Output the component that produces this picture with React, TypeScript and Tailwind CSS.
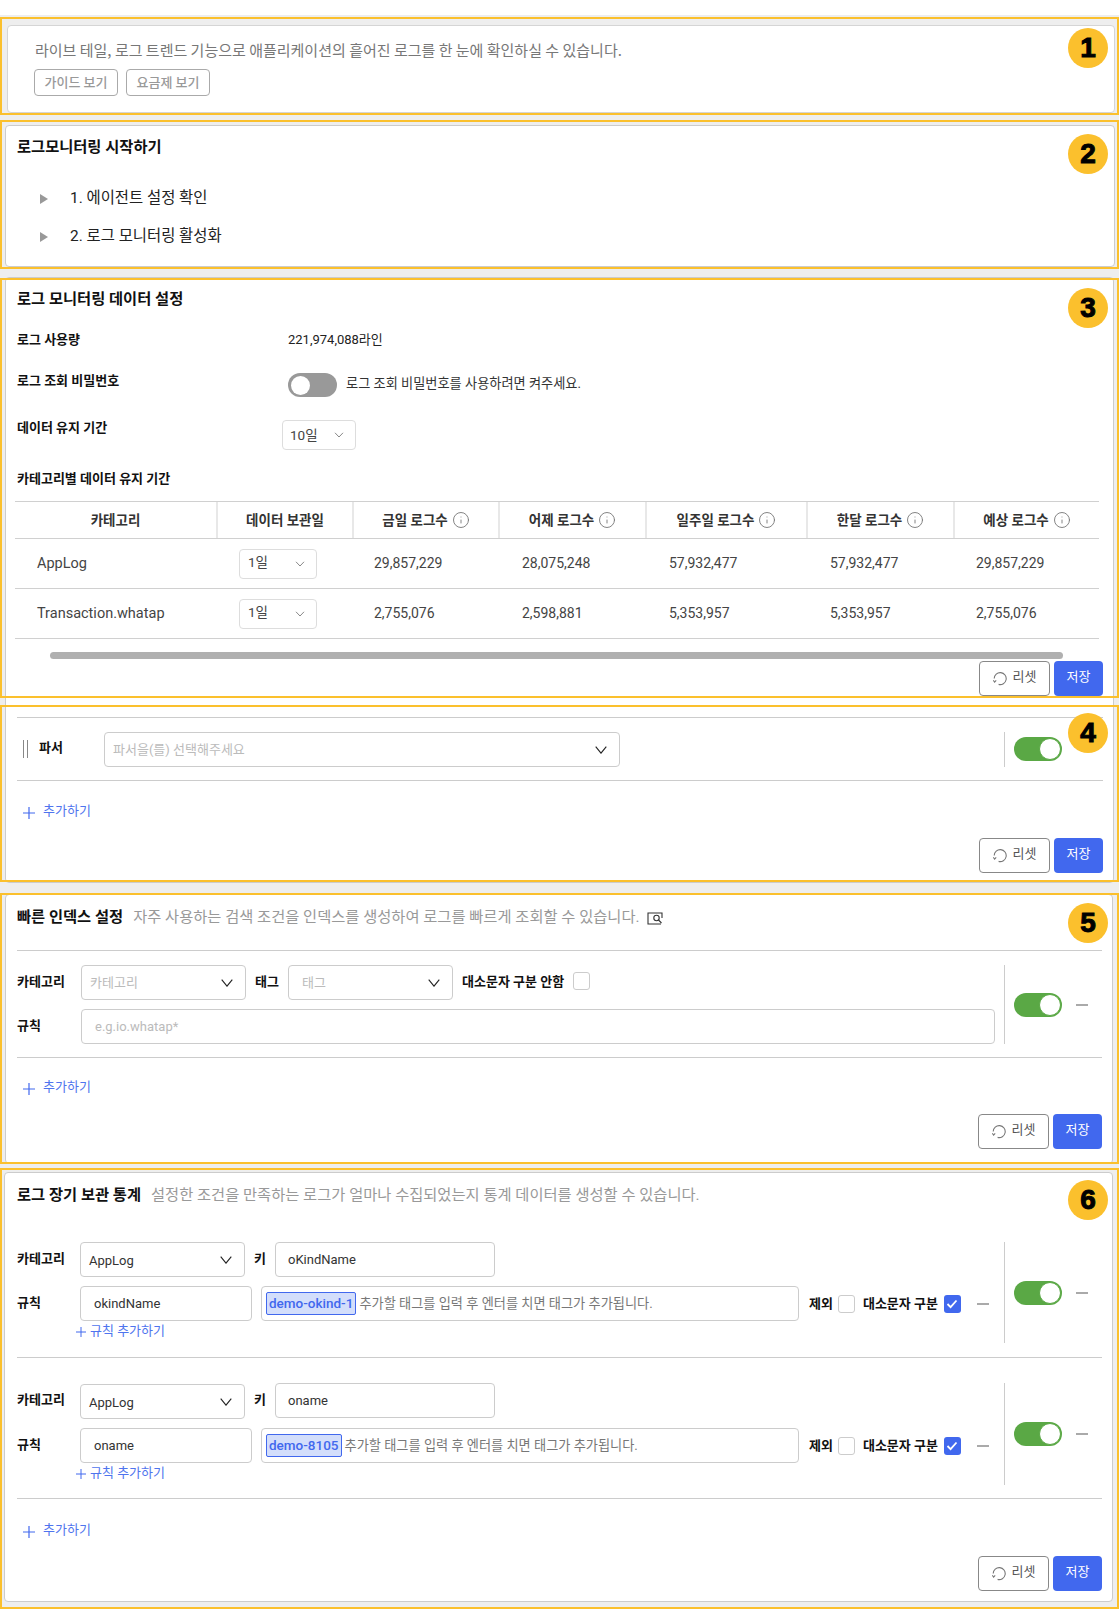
import React from "react";
import { Info } from "lucide-react";

const Chevron = ({ small = false }: { small?: boolean }) =>
  small ? (
    <svg width="10" height="6" viewBox="0 0 10 6" fill="none" stroke="#888" strokeWidth="1"><path d="M1 .8 5 5l4-4.2" /></svg>
  ) : (
    <svg width="12" height="8" viewBox="0 0 12 8" fill="none" stroke="#222" strokeWidth="1.1"><path d="M.7.7 6 7.2 11.3.7" /></svg>
  );

const Toggle = ({ on = true }: { on?: boolean }) =>
  on ? (
    <div className="w-[48px] h-[24px] rounded-full bg-[#5aa845] flex items-center justify-end pr-[1px] shrink-0">
      <div className="w-[22px] h-[22px] rounded-full bg-white border-[1px] border-[#5aa845]" />
    </div>
  ) : (
    <div className="w-[49px] h-[24px] rounded-full bg-[#999999] flex items-center pl-[3px] shrink-0">
      <div className="w-[19px] h-[19px] rounded-full bg-white" />
    </div>
  );

const Minus = () => <div className="w-[12px] h-[2px] bg-[#aaaaaa] shrink-0" />;

const Check = ({ on = false, cls = "" }: { on?: boolean; cls?: string }) =>
  on ? (
    <div className={`w-[17px] h-[18px] rounded-[3px] bg-[#4168ee] flex items-center justify-center shrink-0 ${cls}`}>
      <svg width="12" height="10" viewBox="0 0 12 10" fill="none" stroke="#fff" strokeWidth="1.8"><path d="M1.5 5 4.6 8.2 10.5 1.5" /></svg>
    </div>
  ) : (
    <div className={`w-[17px] h-[18px] rounded-[3px] bg-white border border-[#cccccc] shrink-0 ${cls}`} />
  );

const Buttons = () => (
  <div className="flex justify-end gap-[4px]">
    <div className="w-[71px] h-[35px] border border-[#888888] rounded-[4px] flex items-center justify-center gap-[6px] bg-white text-[13px] text-[#555555]">
      <svg width="14" height="15" viewBox="0 0 14 15" fill="none" stroke="#777" strokeWidth="1.1">
        <path d="M1.2 7.5A6 6 0 1 1 5.6 13.4" />
        <path d="M.3 9.2l1.3 1.9 1.6-1.7" />
      </svg>
      <span className="-mt-[3px]">리셋</span>
    </div>
    <div className="w-[49px] h-[35px] bg-[#4168ee] rounded-[4px] flex items-center justify-center text-white text-[13px]">
      <span className="-mt-[3px]">저장</span>
    </div>
  </div>
);

const AddRow = ({ cls = "" }: { cls?: string }) => (
  <div className={`h-[20px] flex items-center text-[13px] text-[#4f74ee] ${cls}`}>
    <svg width="12" height="12" viewBox="0 0 12 12" stroke="#4168ee" strokeWidth="1.2" className="mt-[3px] mr-[8px]"><path d="M6 0v12M0 6h12" /></svg>
    <span>추가하기</span>
  </div>
);

const InfoTh = ({ children }: { children: React.ReactNode }) => (
  <div className="flex items-center justify-center gap-[4px] border-l-2 border-[#e8e8e8] text-[13.5px] font-bold text-[#333333]">
    <span>{children}</span>
    <Info size={18} strokeWidth={1.2} color="#777777" />
  </div>
);

const PlainTh = ({ children, first = false }: { children: React.ReactNode; first?: boolean }) => (
  <div className={`flex items-center justify-center text-[13.5px] font-bold text-[#333333] ${first ? "" : "border-l-2 border-[#e8e8e8]"}`}>{children}</div>
);

const TableRow = ({ name, v }: { name: string; v: string[] }) => (
  <div className="grid grid-cols-[201px_136px_146px_147px_161px_147px_146px] h-[50px] border-b border-[#d0d0d0] items-center text-[14px] text-[#444444]">
    <div className="pl-[22px] text-[14.5px]">{name}</div>
    <div className="pl-[23px]">
      <div className="w-[78px] h-[30px] border border-[#dddddd] rounded-[4px] flex items-center justify-between pl-[8px] pr-[11px]">
        <span className="-mt-[2px] text-[13.5px]">1일</span>
        <Chevron small />
      </div>
    </div>
    <div className="pl-[22px]">{v[0]}</div>
    <div className="pl-[24px]">{v[1]}</div>
    <div className="pl-[24px]">{v[2]}</div>
    <div className="pl-[24px]">{v[3]}</div>
    <div className="pl-[23px]">{v[4]}</div>
  </div>
);

const Label = ({ children, cls = "" }: { children: React.ReactNode; cls?: string }) => (
  <div className={`text-[13px] font-bold text-[#111111] shrink-0 ${cls}`}>{children}</div>
);

const Select = ({ text, placeholder = false, cls = "" }: { text: string; placeholder?: boolean; cls?: string }) => (
  <div className={`w-[165px] h-[35px] border border-[#cccccc] rounded-[4px] flex items-center justify-between pl-[8px] pr-[12px] shrink-0 ${cls}`}>
    <span className={placeholder ? "text-[13px] text-[#bbbbbb]" : "text-[13px] text-[#333333] mt-[2px]"}>{text}</span>
    <Chevron />
  </div>
);

const Group = ({ keyText, rule, tag, first }: { keyText: string; rule: string; tag: string; first: boolean }) => (
  <div className={`flex ${first ? "h-[101px]" : "h-[102px]"}`}>
    <div className="w-[987px] shrink-0">
      <div className="flex items-start h-[35px]">
        <Label cls="w-[63px] h-[35px] flex items-center pb-[2px]">카테고리</Label>
        <Select text="AppLog" cls={first ? "" : "mt-[1px]"} />
        <Label cls="w-[30px] pl-[9px] h-[35px] flex items-center pb-[2px]">키</Label>
        <div className="w-[220px] h-[35px] border border-[#cccccc] rounded-[4px] flex items-center pl-[12px] text-[13px] text-[#333333]">{keyText}</div>
      </div>
      <div className={`flex items-center h-[35px] ${first ? "mt-[9px]" : "mt-[10px]"}`}>
        <Label cls="w-[63px] pb-[2px]">규칙</Label>
        <div className="w-[172px] h-[35px] border border-[#cccccc] rounded-[4px] flex items-center pl-[13px] text-[13px] text-[#333333] shrink-0">{rule}</div>
        <div className="w-[538px] h-[35px] ml-[9px] border border-[#cccccc] rounded-[4px] flex items-center pl-[4px] shrink-0">
          <span className="h-[23px] border border-[#4168ee] rounded-[2px] bg-[#d3defb] text-[#4168ee] text-[13.5px] font-medium px-[2px] flex items-center leading-none shrink-0">{tag}</span>
          <span className="ml-[3px] text-[13.2px] text-[#777777] whitespace-nowrap">추가할 태그를 입력 후 엔터를 치면 태그가 추가됩니다.</span>
        </div>
        <Label cls="ml-[10px]">제외</Label>
        <Check cls="ml-[5px]" />
        <Label cls="ml-[8px]">대소문자 구분</Label>
        <Check on cls="ml-[6px]" />
        <div className="ml-[16px]"><Minus /></div>
      </div>
      <div className="h-[16px] mt-[2px] ml-[59px] flex items-center text-[13px] text-[#4f74ee]">
        <svg width="10" height="10" viewBox="0 0 10 10" stroke="#4168ee" strokeWidth="1" className="mt-[2px] mr-[4px]"><path d="M5 0v10M0 5h10" /></svg>
        <span>규칙 추가하기</span>
      </div>
    </div>
    <div className="w-px bg-[#cccccc] shrink-0" />
    <div className="ml-[9px] self-center flex items-center">
      <Toggle />
      <div className="ml-[14px]"><Minus /></div>
    </div>
  </div>
);

const Mark = ({ box, badge, n }: { box: string; badge: string; n: string }) => (
  <>
    <div className={`absolute left-0 w-[1119px] border-2 border-[#fbc02d] pointer-events-none ${box}`} />
    <div className={`absolute left-[1068px] w-[40px] h-[40px] rounded-full bg-[#fbc02d] flex items-center justify-center text-black text-[28px] font-bold font-['Liberation_Sans',sans-serif] [-webkit-text-stroke:1px_black] ${badge}`}>{n}</div>
  </>
);

export default function App() {
  return (
    <div className="relative w-[1119px] h-[1609px] bg-[#eeeeee] overflow-hidden font-[Roboto,'Noto_Sans_CJK_KR',sans-serif]">
      <div className="h-[15px] bg-white" />

      {/* 1 */}
      <div className="ml-[7px] mt-[10px] w-[1108px] h-[88px] bg-white border border-[#d5d5d5] rounded-[4px] pl-[26px] pt-[14px]">
        <div className="ml-[1px] text-[15px] leading-[20px] text-[#777777] font-['Noto_Sans_CJK_KR',sans-serif]">라이브 테일, 로그 트렌드 기능으로 애플리케이션의 흩어진 로그를 한 눈에 확인하실 수 있습니다.</div>
        <div className="flex gap-[8px] mt-[9px]">
          <div className="w-[84px] h-[27px] border-[1.5px] border-[#aaaaaa] rounded-[4px] flex items-center justify-center text-[13px] font-medium text-[#999999]">가이드 보기</div>
          <div className="w-[84px] h-[27px] border-[1.5px] border-[#aaaaaa] rounded-[4px] flex items-center justify-center text-[13px] font-medium text-[#999999]">요금제 보기</div>
        </div>
      </div>

      {/* 2 */}
      <div className="ml-[5px] mt-[12px] w-[1110px] h-[142px] bg-white border border-[#cccccc] rounded-[4px] pl-[11px] pt-[11px]">
        <div className="h-[20px] leading-[20px] text-[15.3px] font-bold text-[#111111]">로그모니터링 시작하기</div>
        <div className="mt-[32px] ml-[23px] flex items-center h-[20px] text-[15.4px] text-[#222222]">
          <div className="w-0 h-0 border-y-[5px] border-y-transparent border-l-[8px] border-l-[#999999] mr-[22px]" />
          <span>1. 에이전트 설정 확인</span>
        </div>
        <div className="mt-[18px] ml-[23px] flex items-center h-[20px] text-[15.4px] text-[#222222]">
          <div className="w-0 h-0 border-y-[5px] border-y-transparent border-l-[8px] border-l-[#999999] mr-[22px]" />
          <span>2. 로그 모니터링 활성화</span>
        </div>
      </div>

      {/* 3 + 4 */}
      <div className="ml-[5px] mt-[10px] w-[1109px] h-[606px] bg-white border border-[#cccccc] rounded-[4px] pl-[11px] pr-[10px] pt-[11px]">
        <div className="h-[20px] leading-[20px] text-[15.3px] font-bold text-[#111111]">로그 모니터링 데이터 설정</div>

        <div className="flex mt-[21px] h-[20px] items-center">
          <Label cls="w-[271px]">로그 사용량</Label>
          <span className="text-[13px] text-[#222222]">221,974,088라인</span>
        </div>

        <div className="flex mt-[23px] h-[24px] items-start">
          <Label cls="w-[271px] leading-[16px]">로그 조회 비밀번호</Label>
          <Toggle on={false} />
          <span className="ml-[9px] text-[13.2px] text-[#333333] leading-[22px]">로그 조회 비밀번호를 사용하려면 켜주세요.</span>
        </div>

        <div className="flex mt-[23px] h-[29px] items-start">
          <Label cls="w-[265px] leading-[16px]">데이터 유지 기간</Label>
          <div className="w-[74px] h-[30px] border border-[#dddddd] rounded-[4px] flex items-center justify-between pl-[7px] pr-[11px] text-[13.5px] text-[#444444]">
            <span>10일</span>
            <Chevron small />
          </div>
        </div>

        <Label cls="mt-[20px] h-[20px] leading-[20px]">카테고리별 데이터 유지 기간</Label>

        <div className="mt-[12px] -ml-[2px] w-[1084px] border-t border-[#d0d0d0]">
          <div className="grid grid-cols-[201px_136px_146px_147px_161px_147px_146px] h-[37px] border-b border-[#d0d0d0]">
            <PlainTh first>카테고리</PlainTh>
            <PlainTh>데이터 보관일</PlainTh>
            <InfoTh>금일 로그수</InfoTh>
            <InfoTh>어제 로그수</InfoTh>
            <InfoTh>일주일 로그수</InfoTh>
            <InfoTh>한달 로그수</InfoTh>
            <InfoTh>예상 로그수</InfoTh>
          </div>
          <TableRow name="AppLog" v={["29,857,229", "28,075,248", "57,932,477", "57,932,477", "29,857,229"]} />
          <TableRow name="Transaction.whatap" v={["2,755,076", "2,598,881", "5,353,957", "5,353,957", "2,755,076"]} />
        </div>

        <div className="mt-[13px] ml-[33px] w-[1013px] h-[7px] rounded-full bg-[#b0b0b0]" />
        <div className="mt-[2px]"><Buttons /></div>

        <div className="mt-[21px] h-[64px] border-y border-[#cccccc] flex items-start pt-[14px]">
          <div className="w-[5px] ml-[6px] h-[18px] mt-[8px] border-x border-[#888888] shrink-0" />
          <Label cls="ml-[11px] w-[65px] h-[35px] flex items-center pb-[3px]">파서</Label>
          <div className="w-[516px] h-[35px] border border-[#cccccc] rounded-[4px] flex items-center justify-between pl-[8px] pr-[12px] text-[13px] text-[#bbbbbb]">
            <span>파서을(를) 선택해주세요</span>
            <Chevron />
          </div>
          <div className="ml-[384px] w-px h-[35px] bg-[#cccccc]" />
          <div className="ml-[9px] mt-[5px]"><Toggle /></div>
        </div>

        <AddRow cls="mt-[20px] ml-[6px]" />
        <div className="mt-[17px]"><Buttons /></div>
      </div>

      {/* 5 */}
      <div className="ml-[5px] mt-[11px] w-[1108px] h-[270px] bg-white border border-[#cccccc] rounded-[4px] pl-[11px] pr-[10px] pt-[12px]">
        <div className="h-[20px] flex items-center">
          <span className="text-[15.3px] font-bold text-[#111111]">빠른 인덱스 설정</span>
          <span className="ml-[10px] text-[15.3px] text-[#999999]">자주 사용하는 검색 조건을 인덱스를 생성하여 로그를 빠르게 조회할 수 있습니다.</span>
          <svg width="16" height="13" viewBox="0 0 16 13" fill="none" stroke="#333" strokeWidth="1.1" className="ml-[7px] mt-[2px]">
            <path d="M6 1H1v11h13" />
            <path d="M6 1h9v5" />
            <circle cx="9.5" cy="6" r="2.7" />
            <path d="M11.5 8 14.5 11" />
          </svg>
        </div>

        <div className="mt-[23px] h-[108px] border-y border-[#cccccc] flex pt-[14px] pb-[13px]">
          <div className="w-[978px] shrink-0">
            <div className="flex items-center h-[35px]">
              <Label cls="w-[64px] pb-[2px]">카테고리</Label>
              <Select text="카테고리" placeholder />
              <Label cls="w-[42px] pl-[9px] pb-[2px]">태그</Label>
              <Select text="태그" placeholder cls="pl-[13px]" />
              <Label cls="ml-[9px] pb-[2px]">대소문자 구분 안함</Label>
              <Check cls="ml-[9px] -mt-[3px]" />
            </div>
            <div className="flex items-center h-[35px] mt-[9px]">
              <Label cls="w-[64px] pb-[2px]">규칙</Label>
              <div className="w-[914px] h-[35px] border border-[#cccccc] rounded-[4px] flex items-center pl-[13px] text-[13px] text-[#bbbbbb]">e.g.io.whatap*</div>
            </div>
          </div>
          <div className="ml-[9px] w-px bg-[#cccccc] shrink-0" />
          <div className="ml-[9px] self-center flex items-center">
            <Toggle />
            <div className="ml-[14px]"><Minus /></div>
          </div>
        </div>

        <AddRow cls="mt-[19px] ml-[6px]" />
        <div className="mt-[17px]"><Buttons /></div>
      </div>

      {/* 6 */}
      <div className="ml-[4px] mt-[8px] w-[1109px] h-[430px] bg-white border border-[#cccccc] rounded-[4px] pl-[12px] pr-[10px] pt-[12px]">
        <div className="h-[20px] flex items-center">
          <span className="text-[15.3px] font-bold text-[#111111]">로그 장기 보관 통계</span>
          <span className="ml-[10px] text-[15.3px] text-[#999999]">설정한 조건을 만족하는 로그가 얼마나 수집되었는지 통계 데이터를 생성할 수 있습니다.</span>
        </div>
        <div className="mt-[37px]">
          <Group first keyText="oKindName" rule="okindName" tag="demo-okind-1" />
        </div>
        <div className="mt-[14px] border-t border-[#cccccc]" />
        <div className="mt-[25px]">
          <Group first={false} keyText="oname" rule="oname" tag="demo-8105" />
        </div>
        <div className="mt-[13px] border-t border-[#cccccc]" />
        <AddRow cls="mt-[21px] ml-[6px]" />
        <div className="mt-[16px]"><Buttons /></div>
      </div>

      <Mark box="top-[17px] h-[98px]" badge="top-[28px]" n="1" />
      <Mark box="top-[120px] h-[149px]" badge="top-[134px]" n="2" />
      <Mark box="top-[278px] h-[420px]" badge="top-[288px]" n="3" />
      <Mark box="top-[705px] h-[177px]" badge="top-[713px]" n="4" />
      <Mark box="top-[893px] h-[271px]" badge="top-[903px]" n="5" />
      <Mark box="top-[1168px] h-[441px]" badge="top-[1180px]" n="6" />
    </div>
  );
}
